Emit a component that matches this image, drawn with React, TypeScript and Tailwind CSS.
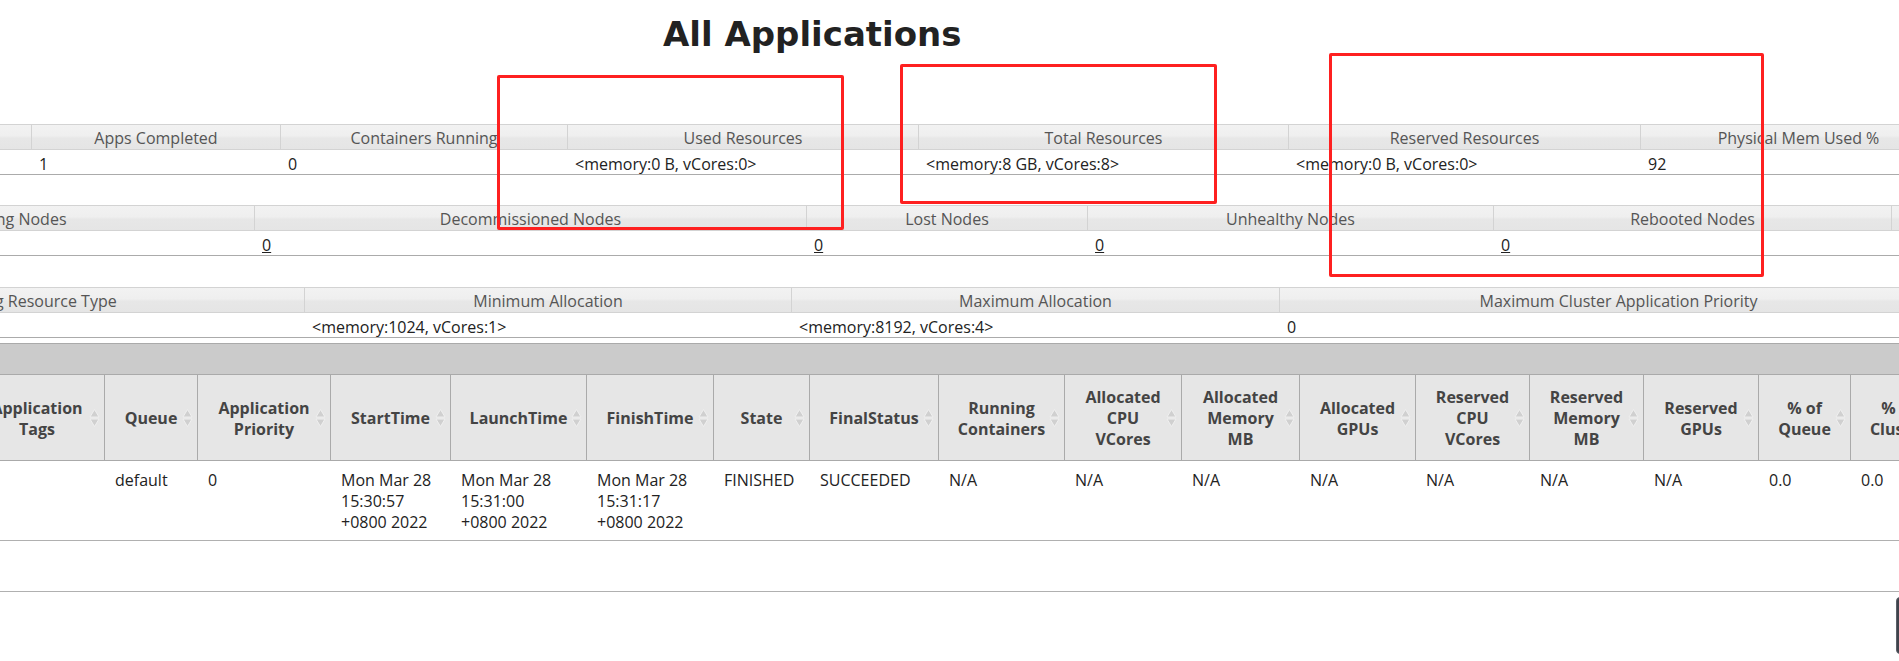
import React from "react";

type MCol = { w: string; label: string; value?: React.ReactNode };

const Link = ({ children }: { children: React.ReactNode }) => (
  <span className="underline text-[#222]">{children}</span>
);

const t1: MCol[] = [
  { w: "w-[251px]", label: "Apps Running", value: "0" },
  { w: "w-[249px]", label: "Apps Completed", value: "1" },
  { w: "w-[287px]", label: "Containers Running", value: "0" },
  { w: "w-[351px]", label: "Used Resources", value: "<memory:0 B, vCores:0>" },
  { w: "w-[370px]", label: "Total Resources", value: "<memory:8 GB, vCores:8>" },
  { w: "w-[352px]", label: "Reserved Resources", value: "<memory:0 B, vCores:0>" },
  { w: "w-[316px]", label: "Physical Mem Used %", value: "92" },
];

const t2: MCol[] = [
  { w: "w-[560px]", label: "Decommissioning Nodes", value: <Link>0</Link> },
  { w: "w-[552px]", label: "Decommissioned Nodes", value: <Link>0</Link> },
  { w: "w-[281px]", label: "Lost Nodes", value: <Link>0</Link> },
  { w: "w-[406px]", label: "Unhealthy Nodes", value: <Link>0</Link> },
  { w: "w-[398px]", label: "Rebooted Nodes", value: <Link>0</Link> },
  { w: "w-[300px]", label: "Shutdown Nodes", value: <Link>0</Link> },
];

const t3: MCol[] = [
  { w: "w-[569px]", label: "Scheduling Resource Type", value: "" },
  { w: "w-[487px]", label: "Minimum Allocation", value: "<memory:1024, vCores:1>" },
  { w: "w-[488px]", label: "Maximum Allocation", value: "<memory:8192, vCores:4>" },
  { w: "w-[678px]", label: "Maximum Cluster Application Priority", value: "0" },
];

function Metrics({ cols, shift }: { cols: MCol[]; shift: string }) {
  return (
    <div className={`flex flex-col w-max ${shift}`}>
      <div className="flex h-[26px] border-y border-[#d3d3d3] bg-[linear-gradient(to_bottom,#f2f2f2_0%,#efefef_45%,#e7e7e7_55%,#e5e5e5_100%)]">
        {cols.map((c, i) => (
          <div
            key={i}
            className={`${c.w} shrink-0 ${i > 0 ? "border-l border-[#d3d3d3]" : ""} pt-[3px] text-center leading-[21px] text-[#555] whitespace-nowrap`}
          >
            {c.label}
          </div>
        ))}
      </div>
      <div className="flex h-[25px] border-b border-[#ababab]">
        {cols.map((c, i) => (
          <div
            key={i}
            className={`${c.w} shrink-0 pl-[8px] pt-[5px] leading-[19px] text-[#222] whitespace-nowrap`}
          >
            {c.value}
          </div>
        ))}
      </div>
    </div>
  );
}

type ACol = { w: string; h: string[]; v: string[] };

const appCols: ACol[] = [
  { w: "w-[135px]", h: ["Application", "Tags"], v: [] },
  { w: "w-[93px]", h: ["Queue"], v: ["default"] },
  { w: "w-[133px]", h: ["Application", "Priority"], v: ["0"] },
  { w: "w-[120px]", h: ["StartTime"], v: ["Mon Mar 28", "15:30:57", "+0800 2022"] },
  { w: "w-[136px]", h: ["LaunchTime"], v: ["Mon Mar 28", "15:31:00", "+0800 2022"] },
  { w: "w-[127px]", h: ["FinishTime"], v: ["Mon Mar 28", "15:31:17", "+0800 2022"] },
  { w: "w-[96px]", h: ["State"], v: ["FINISHED"] },
  { w: "w-[129px]", h: ["FinalStatus"], v: ["SUCCEEDED"] },
  { w: "w-[126px]", h: ["Running", "Containers"], v: ["N/A"] },
  { w: "w-[117px]", h: ["Allocated", "CPU", "VCores"], v: ["N/A"] },
  { w: "w-[118px]", h: ["Allocated", "Memory", "MB"], v: ["N/A"] },
  { w: "w-[116px]", h: ["Allocated", "GPUs"], v: ["N/A"] },
  { w: "w-[114px]", h: ["Reserved", "CPU", "VCores"], v: ["N/A"] },
  { w: "w-[114px]", h: ["Reserved", "Memory", "MB"], v: ["N/A"] },
  { w: "w-[115px]", h: ["Reserved", "GPUs"], v: ["N/A"] },
  { w: "w-[92px]", h: ["% of", "Queue"], v: ["0.0"] },
  { w: "w-[96px]", h: ["% of", "Cluster"], v: ["0.0"] },
];

function SortIcon() {
  return (
    <svg width="11" height="19" viewBox="0 0 11 19" className="block">
      <path d="M5.5 1 L10 8.5 L1 8.5 Z" fill="#d0d0d0" stroke="#efefef" strokeWidth="1" />
      <path d="M1 10.5 L10 10.5 L5.5 18 Z" fill="#d0d0d0" stroke="#efefef" strokeWidth="1" />
    </svg>
  );
}

function AppsTable() {
  return (
    <div className="flex flex-col">
      <div className="mt-[5px] h-[31px] border-t border-[#aaa] bg-[#cbcbcb]" />
      <div className="flex w-max ml-[-30px] h-[87px] border-y border-[#aaa] bg-[#e6e6e6]">
        {appCols.map((c, i) => (
          <div
            key={i}
            className={`${c.w} shrink-0 relative border-r border-[#aaa] pt-[2px] flex items-center justify-center text-center font-bold text-[#444] leading-[21px] text-[16px]`}
          >
            <div className="whitespace-nowrap">
              {c.h.map((l, j) => (
                <div key={j}>{l}</div>
              ))}
            </div>
            <div className="absolute right-[4px] top-1/2 -translate-y-1/2">
              <SortIcon />
            </div>
          </div>
        ))}
      </div>
      <div className="flex w-max ml-[-30px] h-[80px] border-b border-[#b0b0b0]">
        {appCols.map((c, i) => (
          <div
            key={i}
            className={`${c.w} shrink-0 pl-[10px] pt-[9px] leading-[21px] text-[#222] whitespace-nowrap`}
          >
            {c.v.map((l, j) => (
              <div key={j}>{l}</div>
            ))}
          </div>
        ))}
      </div>
      <div className="h-[51px] border-b border-[#b0b0b0]" />
    </div>
  );
}

export default function App() {
  return (
    <div className="relative w-[1899px] h-[661px] overflow-hidden bg-white font-['Open_Sans',sans-serif] text-[16px] text-[#222]">
      <div className="h-[124px] pt-[17px] pl-[663px]">
        <h1 className="font-['DejaVu_Sans',sans-serif] font-bold text-[34px] leading-[34px] text-[#222] whitespace-nowrap">
          All Applications
        </h1>
      </div>
      <Metrics cols={t1} shift="ml-[-220px]" />
      <div className="mt-[30px]">
        <Metrics cols={t2} shift="ml-[-306px]" />
      </div>
      <div className="mt-[31px]">
        <Metrics cols={t3} shift="ml-[-265px]" />
      </div>
      <AppsTable />

      {/* red annotation boxes */}
      <div className="absolute left-[497px] top-[75px] w-[347px] h-[155px] border-[3px] border-[#fe2020] rounded-[2px]" />
      <div className="absolute left-[900px] top-[64px] w-[317px] h-[140px] border-[3px] border-[#fe2020] rounded-[2px]" />
      <div className="absolute left-[1329px] top-[53px] w-[435px] h-[224px] border-[3px] border-[#fe2020] rounded-[2px]" />

      {/* floating dark widget at right edge */}
      <div className="absolute left-[1896px] top-[597px] w-[12px] h-[57px] rounded-[4px] bg-[#3f434b] border border-[#5a5f68]" />
    </div>
  );
}
